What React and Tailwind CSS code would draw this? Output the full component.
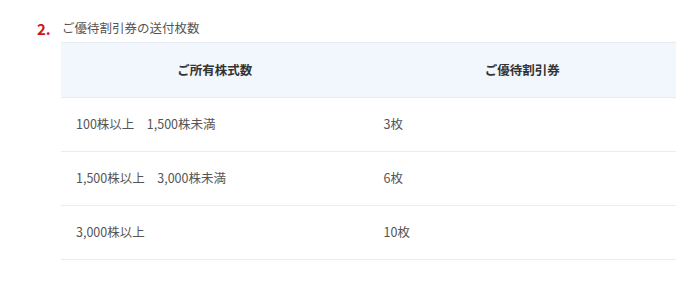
import React from "react";

const ROWS = [
  { shares: "100株以上　1,500株未満", tickets: "3枚" },
  { shares: "1,500株以上　3,000株未満", tickets: "6枚" },
  { shares: "3,000株以上", tickets: "10枚" },
];

const FONT = { fontFamily: '"Noto Sans CJK JP", "Noto Sans", sans-serif' };

export default function App() {
  return (
    <div className="w-[700px] h-[284px] bg-white pl-[37px] pt-[17px]" style={FONT}>
      <div className="flex items-center h-[22px]">
        <span className="w-[25px] text-[15px] font-bold text-[#d0121b] leading-none">2.</span>
        <span className="text-[12.5px] text-[#555] leading-none">ご優待割引券の送付枚数</span>
      </div>

      <table className="ml-[24px] mt-[3px] w-[615px] border-collapse table-fixed">
        <thead>
          <tr className="bg-[#f1f7fd] border-t border-b border-[#e6ecf2]">
            <th className="h-[55px] text-[12.5px] font-bold text-[#333] text-center">ご所有株式数</th>
            <th className="h-[55px] text-[12.5px] font-bold text-[#333] text-center">ご優待割引券</th>
          </tr>
        </thead>
        <tbody>
          {ROWS.map((r) => (
            <tr key={r.shares} className="border-b border-[#ececec]">
              <td className="h-[54px] pl-[15px] text-[12.5px] text-[#555] whitespace-nowrap">{r.shares}</td>
              <td className="h-[54px] pl-[15px] text-[12.5px] text-[#555]">{r.tickets}</td>
            </tr>
          ))}
        </tbody>
      </table>
    </div>
  );
}
